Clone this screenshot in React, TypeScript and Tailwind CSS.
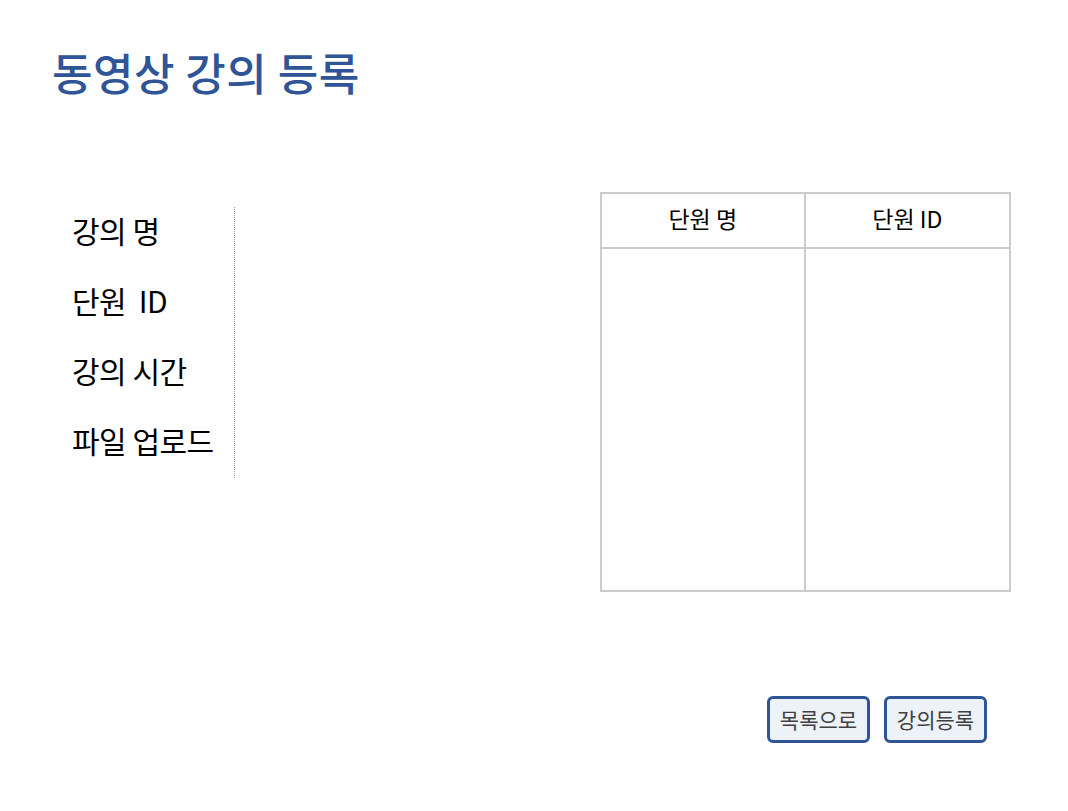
const FONT = '"Noto Sans CJK KR", "Noto Sans", sans-serif';

const LABELS = ['강의 명', '단원  ID', '강의 시간', '파일 업로드'];

export default function App() {
  return (
    <div className="relative w-[1068px] h-[811px] bg-white" style={{ fontFamily: FONT }}>
      {/* Title */}
      <div className="pt-[42px] pl-[52px]">
        <h1 className="text-[44px] leading-[60px] font-medium text-[#2f5597] tracking-[0.5px]">동영상 강의 등록</h1>
      </div>

      <div className="flex mt-[90px]">
        {/* Labels */}
        <div className="ml-[72px] mt-[15px] w-[163px] h-[271px] border-r border-dotted border-[#8a9fb8]">
          <div className="-mt-[9px] flex flex-col">
            {LABELS.map((l, i) => (
              <div key={i} className="h-[70px] shrink-0 flex items-center text-[30px] tracking-[-0.5px] text-black whitespace-pre leading-none">
                <span className="-mt-[6px]">{l}</span>
              </div>
            ))}
          </div>
        </div>

        {/* Table */}
        <div className="ml-[365px] w-[411px] h-[400px] border-2 border-[#cccccc] grid grid-cols-2 grid-rows-[55px_1fr]">
          <div className="border-r-2 border-b-2 border-[#cccccc] flex items-center justify-center pb-[4px] text-[23px] text-black">단원 명</div>
          <div className="border-b-2 border-[#cccccc] flex items-center justify-center pb-[4px] text-[23px] text-black">단원 ID</div>
          <div className="border-r-2 border-[#cccccc]" />
          <div />
        </div>
      </div>

      {/* Buttons */}
      <div className="flex gap-[14px] ml-[767px] mt-[104px]">
        <button className="w-[103px] h-[47px] rounded-[6px] border-[3px] border-[#2f5597] bg-[#edf2f9] text-[21px] text-[#404040]">목록으로</button>
        <button className="w-[103px] h-[47px] rounded-[6px] border-[3px] border-[#2f5597] bg-[#edf2f9] text-[21px] text-[#404040]">강의등록</button>
      </div>
    </div>
  );
}
